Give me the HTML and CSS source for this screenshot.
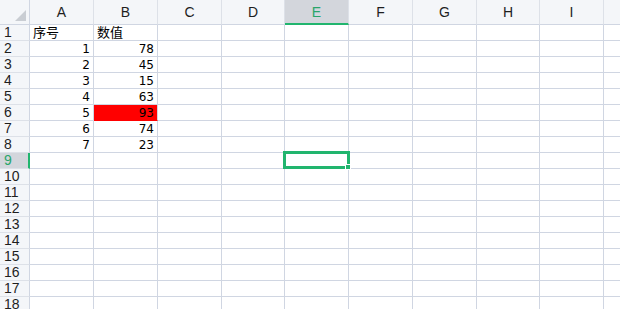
FILE: index.html
```html
<!DOCTYPE html>
<html lang="zh">
<head>
<meta charset="utf-8">
<title>Sheet</title>
<link rel="stylesheet" href="styles.css">
</head>
<body>
<div class="sheet">
  <div class="grid">
    <div class="hd corner"><span class="tri"></span></div>
    <div class="hd col">A</div><div class="hd col">B</div><div class="hd col">C</div><div class="hd col">D</div><div class="hd col sel">E</div><div class="hd col">F</div><div class="hd col">G</div><div class="hd col">H</div><div class="hd col">I</div><div class="hd col last"></div>

    <div class="hd row">1</div><div class="c t">序号</div><div class="c t">数值</div><div class="c"></div><div class="c"></div><div class="c"></div><div class="c"></div><div class="c"></div><div class="c"></div><div class="c"></div><div class="c"></div>
    <div class="hd row">2</div><div class="c n">1</div><div class="c n">78</div><div class="c"></div><div class="c"></div><div class="c"></div><div class="c"></div><div class="c"></div><div class="c"></div><div class="c"></div><div class="c"></div>
    <div class="hd row">3</div><div class="c n">2</div><div class="c n">45</div><div class="c"></div><div class="c"></div><div class="c"></div><div class="c"></div><div class="c"></div><div class="c"></div><div class="c"></div><div class="c"></div>
    <div class="hd row">4</div><div class="c n">3</div><div class="c n">15</div><div class="c"></div><div class="c"></div><div class="c"></div><div class="c"></div><div class="c"></div><div class="c"></div><div class="c"></div><div class="c"></div>
    <div class="hd row">5</div><div class="c n">4</div><div class="c n">63</div><div class="c"></div><div class="c"></div><div class="c"></div><div class="c"></div><div class="c"></div><div class="c"></div><div class="c"></div><div class="c"></div>
    <div class="hd row">6</div><div class="c n">5</div><div class="c n red">93</div><div class="c"></div><div class="c"></div><div class="c"></div><div class="c"></div><div class="c"></div><div class="c"></div><div class="c"></div><div class="c"></div>
    <div class="hd row">7</div><div class="c n">6</div><div class="c n">74</div><div class="c"></div><div class="c"></div><div class="c"></div><div class="c"></div><div class="c"></div><div class="c"></div><div class="c"></div><div class="c"></div>
    <div class="hd row">8</div><div class="c n">7</div><div class="c n">23</div><div class="c"></div><div class="c"></div><div class="c"></div><div class="c"></div><div class="c"></div><div class="c"></div><div class="c"></div><div class="c"></div>
    <div class="hd row selrow">9</div><div class="c"></div><div class="c"></div><div class="c"></div><div class="c"></div><div class="c"></div><div class="c"></div><div class="c"></div><div class="c"></div><div class="c"></div><div class="c"></div>
    <div class="hd row">10</div><div class="c"></div><div class="c"></div><div class="c"></div><div class="c"></div><div class="c"></div><div class="c"></div><div class="c"></div><div class="c"></div><div class="c"></div><div class="c"></div>
    <div class="hd row">11</div><div class="c"></div><div class="c"></div><div class="c"></div><div class="c"></div><div class="c"></div><div class="c"></div><div class="c"></div><div class="c"></div><div class="c"></div><div class="c"></div>
    <div class="hd row">12</div><div class="c"></div><div class="c"></div><div class="c"></div><div class="c"></div><div class="c"></div><div class="c"></div><div class="c"></div><div class="c"></div><div class="c"></div><div class="c"></div>
    <div class="hd row">13</div><div class="c"></div><div class="c"></div><div class="c"></div><div class="c"></div><div class="c"></div><div class="c"></div><div class="c"></div><div class="c"></div><div class="c"></div><div class="c"></div>
    <div class="hd row">14</div><div class="c"></div><div class="c"></div><div class="c"></div><div class="c"></div><div class="c"></div><div class="c"></div><div class="c"></div><div class="c"></div><div class="c"></div><div class="c"></div>
    <div class="hd row">15</div><div class="c"></div><div class="c"></div><div class="c"></div><div class="c"></div><div class="c"></div><div class="c"></div><div class="c"></div><div class="c"></div><div class="c"></div><div class="c"></div>
    <div class="hd row">16</div><div class="c"></div><div class="c"></div><div class="c"></div><div class="c"></div><div class="c"></div><div class="c"></div><div class="c"></div><div class="c"></div><div class="c"></div><div class="c"></div>
    <div class="hd row">17</div><div class="c"></div><div class="c"></div><div class="c"></div><div class="c"></div><div class="c"></div><div class="c"></div><div class="c"></div><div class="c"></div><div class="c"></div><div class="c"></div>
    <div class="hd row">18</div><div class="c"></div><div class="c"></div><div class="c"></div><div class="c"></div><div class="c"></div><div class="c"></div><div class="c"></div><div class="c"></div><div class="c"></div><div class="c"></div>
  </div>
  <div class="cursor"><span class="handle"></span></div>
</div>
</body>
</html>
```
FILE: styles.css
```css
html, body {
  margin: 0;
  padding: 0;
  background: #ffffff;
}
.sheet {
  position: relative;
  width: 620px;
  height: 309px;
  overflow: hidden;
  font-family: "Noto Sans CJK SC", "Microsoft YaHei", sans-serif;
  color: #000;
}
.grid {
  display: grid;
  grid-template-columns: 30px 64px 64px 64px 63px 64px 64px 64px 63px 64px 40px;
  grid-template-rows: 25px repeat(18, 16px);
}
.grid > div {
  box-sizing: border-box;
  border-right: 1px solid #d0d6e2;
  border-bottom: 1px solid #d0d6e2;
  white-space: nowrap;
}
.hd {
  background: #f4f6f9;
  color: #1e1e1e;
  font-family: "Liberation Sans", "Segoe UI", sans-serif;
}
.grid > .col {
  font-size: 14px;
  line-height: 24px;
  text-align: center;
  border-right-color: #dde1e8;
}
.grid > .col.sel {
  background: #d3d6dc;
  color: #2aa56a;
  border-bottom: 2px solid #21b56e;
}
.grid > .row {
  font-size: 14px;
  line-height: 15px;
  padding-left: 4px;
  border-bottom-color: #dde1e8;
}
.grid > .row.selrow {
  background: #d3d6dc;
  color: #2aa56a;
  border-right: 2px solid #21b56e;
}
.corner {
  position: relative;
}
.tri {
  position: absolute;
  right: 3px;
  bottom: 3px;
  width: 0;
  height: 0;
  border-left: 11px solid transparent;
  border-bottom: 11px solid #c9cdd3;
}
.c {
  font-size: 12px;
  line-height: 15px;
}
.c.t {
  font-size: 13px;
  padding-left: 3px;
  line-height: 14px;
}
.c.n {
  font-family: "DejaVu Sans", "Liberation Sans", sans-serif;
  text-align: right;
  padding-right: 3px;
  font-size: 12px;
  line-height: 16px;
}
.grid > .c.red {
  background: #ff0000;
  border-bottom-color: #ff0000;
}
.cursor {
  position: absolute;
  left: 283px;
  top: 151px;
  width: 61px;
  height: 12px;
  border: 3px solid #21b56e;
}
.handle {
  position: absolute;
  right: -4px;
  bottom: -4px;
  width: 4px;
  height: 4px;
  background: #21b56e;
  border: 1px solid #ffffff;
}
```
